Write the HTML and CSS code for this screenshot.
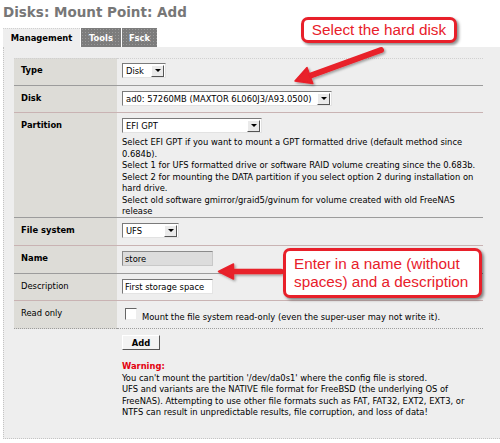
FILE: index.html
```html
<!DOCTYPE html>
<html>
<head>
<meta charset="utf-8">
<title>Disks: Mount Point: Add</title>
<link rel="stylesheet" href="styles.css">
</head>
<body>
<div class="page">
  <h1 class="title">Disks: Mount Point: Add</h1>
  <div class="tabs">
    <span class="tab tab-mgmt active">Management</span>
    <span class="tab tab-tools">Tools</span>
    <span class="tab tab-fsck">Fsck</span>
  </div>
  <div class="panel">
    <table class="form">
      <colgroup><col class="c-lbl"><col class="c-val"></colgroup>
      <tr class="row first h28 line-gray">
        <td class="lbl req">Type</td>
        <td class="val"><span class="sel w-type"><span class="txt">Disk</span><span class="btn"><i></i></span></span></td>
      </tr>
      <tr class="row h27 line-pink">
        <td class="lbl req">Disk</td>
        <td class="val"><span class="sel w-disk"><span class="txt">ad0: 57260MB (MAXTOR 6L060J3/A93.0500)</span><span class="btn"><i></i></span></span></td>
      </tr>
      <tr class="row h105 line-gray">
        <td class="lbl req">Partition</td>
        <td class="val">
          <span class="sel w-part"><span class="txt">EFI GPT</span><span class="btn"><i></i></span></span>
          <div class="desc">Select EFI GPT if you want to mount a GPT formatted drive (default method since<br>0.684b).<br>Select 1 for UFS formatted drive or software RAID volume creating since the 0.683b.<br>Select 2 for mounting the DATA partition if you select option 2 during installation on<br>hard drive.<br>Select old software gmirror/graid5/gvinum for volume created with old FreeNAS<br>release</div>
        </td>
      </tr>
      <tr class="row h28 line-pink">
        <td class="lbl req">File system</td>
        <td class="val"><span class="sel w-fs"><span class="txt">UFS</span><span class="btn"><i></i></span></span></td>
      </tr>
      <tr class="row h28 line-gray">
        <td class="lbl req">Name</td>
        <td class="val"><span class="input disabled">store</span></td>
      </tr>
      <tr class="row h27 line-pink">
        <td class="lbl">Description</td>
        <td class="val"><span class="input">First storage space</span></td>
      </tr>
      <tr class="row h28 line-dot">
        <td class="lbl">Read only</td>
        <td class="val"><div class="check-line"><span class="checkbox"></span><span class="check-text">Mount the file system read-only (even the super-user may not write it).</span></div></td>
      </tr>
    </table>
    <div class="below">
      <span class="add">Add</span>
      <div class="warn"><span class="warn-title">Warning:</span><br>You can't mount the partition '/dev/da0s1' where the config file is stored.<br>UFS and variants are the NATIVE file format for FreeBSD (the underlying OS of<br>FreeNAS). Attempting to use other file formats such as FAT, FAT32, EXT2, EXT3, or<br>NTFS can result in unpredictable results, file corruption, and loss of data!</div>
    </div>
  </div>

  <svg class="arrows" width="500" height="443" viewBox="0 0 500 443" aria-hidden="true">
    <defs>
      <filter id="sh" x="-20%" y="-40%" width="140%" height="180%">
        <feDropShadow dx="1.5" dy="1.5" stdDeviation="1" flood-color="#000" flood-opacity="0.35"/>
      </filter>
    </defs>
    <g filter="url(#sh)" fill="#e8202a" stroke="#e8202a">
      <line x1="381" y1="50" x2="308" y2="76.5" stroke-width="6" stroke-linecap="round"/>
      <polygon points="295,81 312.8,83.6 307,67.6" stroke-width="1.5" stroke-linejoin="round"/>
    </g>
    <g filter="url(#sh)" fill="#e8202a" stroke="#e8202a">
      <line x1="232" y1="271.5" x2="281" y2="271.5" stroke-width="5.5" stroke-linecap="round"/>
      <polygon points="218.5,271.5 233.5,264 233.5,279" stroke-width="1.5" stroke-linejoin="round"/>
    </g>
  </svg>

  <div class="callout c1">Select the hard disk</div>
  <div class="callout c2">Enter in a name (without<br>spaces) and a description</div>
</div>
</body>
</html>
```

FILE: styles.css
```css
html, body {
  margin: 0;
  padding: 0;
  background: #fff;
}

body {
  font-family: "DejaVu Sans Condensed", "DejaVu Sans", sans-serif;
  font-stretch: semi-condensed;
  font-size: 9.3px;
  line-height: 11.5px;
  color: #000;
}

.page {
  position: relative;
  width: 500px;
  height: 443px;
  overflow: hidden;
}

.title {
  margin: 0 0 6px 0;
  padding: 2px 0 0 3px;
  height: 20px;
  font-family: "DejaVu Sans", sans-serif;
  font-stretch: normal;
  font-size: 13.5px;
  line-height: 20px;
  font-weight: bold;
  color: #777;
}

.tabs {
  display: flex;
  margin-left: 3px;
  height: 19px;
}

.tab {
  display: block;
  height: 19px;
  line-height: 19px;
  text-align: center;
  font-weight: bold;
  color: #fff;
  background-color: #7c7c7c;
  background-image: radial-gradient(circle, #9a9a9a 0.6px, transparent 0.8px);
  background-size: 3px 3px;
  margin-right: 1px;
}

.tab.active {
  background: #eee;
  color: #000;
  border-top: 1px dotted #d0d0d0;
  height: 18px;
  line-height: 18px;
}

.tab-mgmt { width: 77px; }
.tab-tools { width: 40px; }
.tab-fsck { width: 35px; }

.panel {
  box-sizing: border-box;
  height: 392px;
  margin-left: 3px;
  padding: 11px 0 0 10px;
  background: #eee;
  border-left: 1px dotted #c4c4c4;
  border-bottom: 1px dotted #c4c4c4;
}

.form {
  border-collapse: separate;
  border-spacing: 0;
  table-layout: fixed;
  width: 469px;
}

.c-lbl { width: 103px; }
.c-val { width: 366px; }

.form td {
  box-sizing: border-box;
  vertical-align: top;
}

.h28 td { height: 28px; }
.h27 td { height: 27px; }
.h105 td { height: 105px; }

.lbl {
  background: #dddcd7;
  padding: 5.5px 4px 0 7px;
}

.lbl.req {
  font-weight: bold;
}

.val {
  padding: 5px 5px 0 5px;
}

.line-gray td { border-bottom: 1px solid #9c9c9c; }
.line-pink td { border-bottom: 1px solid #c9b3b3; }
.line-dot td { border-bottom: 1px dotted #9c9c9c; }

.first td { border-top: 1px dotted #d0d0d0; }
.first .lbl { padding-top: 5px; }
.first .val { padding-top: 4px; }

.sel {
  box-sizing: border-box;
  display: inline-flex;
  align-items: center;
  height: 15px;
  background: #fff;
  border: 1px solid;
  border-color: #7a7a7a #e2e2e2 #e2e2e2 #7a7a7a;
  vertical-align: top;
}

.sel .txt {
  flex: 1;
  padding-left: 3px;
  white-space: nowrap;
  overflow: hidden;
}

.sel .btn {
  box-sizing: border-box;
  display: flex;
  align-items: center;
  justify-content: center;
  width: 13px;
  height: 12px;
  margin-right: 1px;
  background: #eaeaea;
  border: 1px solid;
  border-color: #fff #555 #555 #fff;
}

.sel .btn i {
  display: block;
  width: 0;
  height: 0;
  border-left: 3px solid transparent;
  border-right: 3px solid transparent;
  border-top: 3px solid #000;
}

.w-type { width: 44px; }
.w-disk { width: 210px; }
.w-part { width: 140px; }
.w-fs { width: 57px; }

.desc {
  margin-top: 3px;
}

.input {
  box-sizing: border-box;
  display: inline-block;
  width: 91px;
  height: 15px;
  line-height: 13px;
  padding-left: 2px;
  background: #fff;
  border: 1px solid;
  border-color: #777 #e4e4e4 #e4e4e4 #777;
  vertical-align: top;
  white-space: nowrap;
}

.input.disabled {
  background: #dcdcdc;
  border-color: #8a8a8a #c8c8c8 #c8c8c8 #8a8a8a;
}

.check-line {
  display: flex;
  align-items: flex-start;
}

.checkbox {
  box-sizing: border-box;
  display: block;
  flex: none;
  width: 12px;
  height: 12px;
  margin: 2px 5px 0 3px;
  background: #fff;
  border: 1px solid;
  border-color: #666 #eee #eee #666;
}

.check-text {
  margin-top: 5px;
  white-space: nowrap;
}

.below {
  padding: 6px 0 0 108px;
}

.add {
  box-sizing: border-box;
  display: block;
  width: 38px;
  height: 15px;
  line-height: 13px;
  text-align: center;
  font-weight: bold;
  background: #f3f3f3;
  border: 1px solid;
  border-color: #fff #555 #555 #fff;
}

.warn {
  margin-top: 10px;
}

.warn-title {
  color: #e3000f;
  font-weight: bold;
}

.arrows {
  position: absolute;
  left: 0;
  top: 0;
  pointer-events: none;
}

.callout {
  position: absolute;
  box-sizing: border-box;
  background: #fff;
  border: 3px solid #e8202a;
  border-radius: 7px;
  box-shadow: 2px 2px 3px rgba(0, 0, 0, 0.45);
  color: #e8202a;
  font-family: "Liberation Sans", Arial, sans-serif;
  font-stretch: normal;
  font-size: 15.3px;
}

.c1 {
  left: 301px;
  top: 17px;
  width: 156px;
  height: 26px;
  line-height: 20px;
  text-align: center;
}

.c2 {
  left: 283px;
  top: 248px;
  width: 199px;
  height: 50px;
  padding: 4px 0 0 8px;
  line-height: 18.4px;
}
```
